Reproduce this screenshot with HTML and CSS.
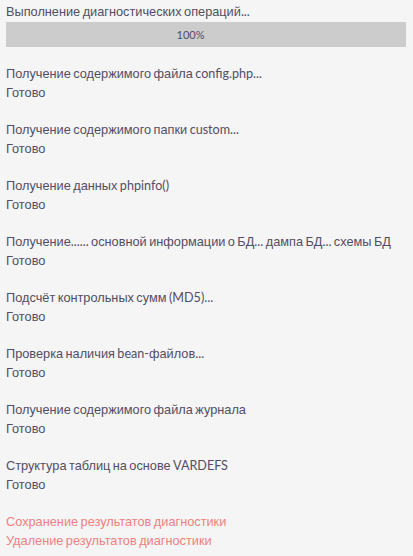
FILE: index.html
```html
<!DOCTYPE html>
<html lang="ru">
<head>
<meta charset="utf-8">
<link rel="stylesheet" href="styles.css">
</head>
<body>
<div class="page">
  <div class="line">Выполнение диагностических операций<span class="lat">...</span></div>
  <div class="bar"><span class="bar-label">100%</span></div>
  <div class="line">&nbsp;</div>
  <div class="step"><div class="line">Получение содержимого файла <span class="lat">config.php...</span></div><div class="line">Готово</div></div>
  <div class="step"><div class="line">Получение содержимого папки <span class="lat">custom...</span></div><div class="line">Готово</div></div>
  <div class="step"><div class="line">Получение данных <span class="lat">phpinfo()</span></div><div class="line">Готово</div></div>
  <div class="step"><div class="line">Получение<span class="lat">......</span> основной информации о БД<span class="lat">...</span> дампа БД<span class="lat">...</span> схемы БД</div><div class="line">Готово</div></div>
  <div class="step"><div class="line">Подсчёт контрольных сумм <span class="lat">(MD5)...</span></div><div class="line">Готово</div></div>
  <div class="step"><div class="line">Проверка наличия <span class="lat">bean-</span>файлов<span class="lat">...</span></div><div class="line">Готово</div></div>
  <div class="step"><div class="line">Получение содержимого файла журнала</div><div class="line">Готово</div></div>
  <div class="step"><div class="line">Структура таблиц на основе <span class="lat">VARDEFS</span></div><div class="line">Готово</div></div>
  <div class="line link">Сохранение результатов диагностики</div>
  <div class="line link">Удаление результатов диагностики</div>
</div>
</body>
</html>
```
FILE: styles.css
```css
html, body {
  margin: 0;
  background: #f5f5f5;
}
.page {
  padding: 3px 6px 0 6px;
  font-family: "Liberation Sans", Arial, sans-serif;
  font-size: 12.75px;
  word-spacing: -1.1px;
  color: #534d64;
}
.lat {
  font-family: Lato, sans-serif;
  font-size: 12.6px;
  word-spacing: 0;
}
.line {
  line-height: 18.67px;
  height: 18.67px;
  white-space: nowrap;
}
.bar {
  width: 400px;
  height: 25px;
  background: #cccccc;
  display: flex;
  align-items: center;
  justify-content: center;
  padding-right: 31px;
  box-sizing: border-box;
}
.bar-label {
  font-family: Lato, sans-serif;
  font-size: 11px;
  color: #534d64;
}
.step {
  margin-bottom: 18.67px;
}
.link {
  color: #f08080;
}
```
